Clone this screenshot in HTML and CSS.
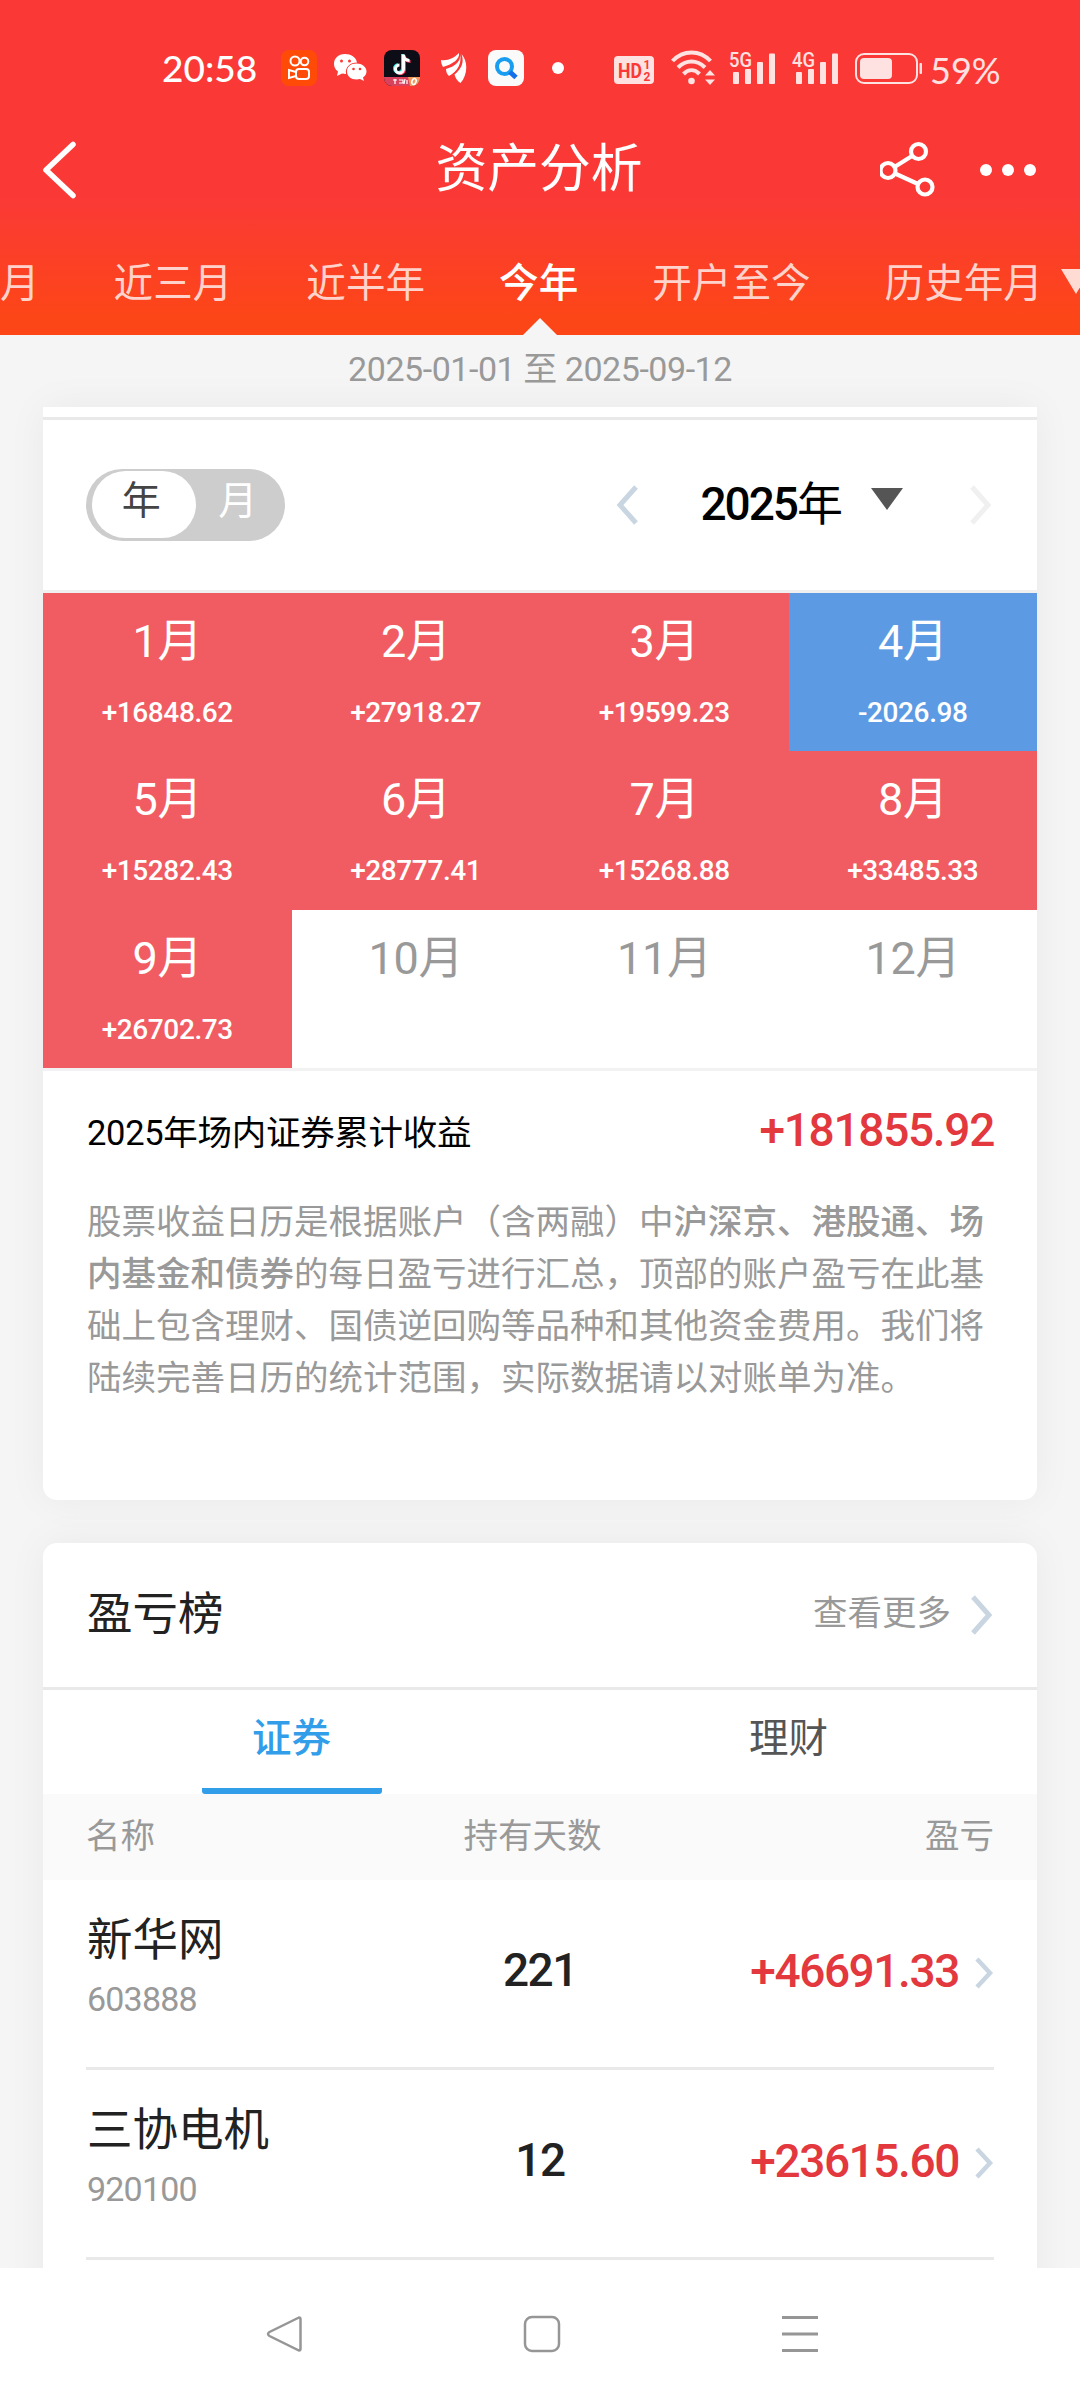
FILE: index.html
```html
<!DOCTYPE html>
<html lang="zh-CN">
<head>
  <meta charset="UTF-8" />
  <meta name="viewport" content="width=device-width, initial-scale=1.0"/>
  <title>资产分析</title>
  <link rel="stylesheet" href="styles.css">
</head>
<body>
  <header class="header">
    <div class="status-bar">
      <span class="time">20:58</span>
      <svg class="ico-ks" width="36" height="36" viewBox="0 0 36 36">
        <rect width="36" height="36" rx="8" fill="#ff4a08"/>
        <g fill="none" stroke="#fff" stroke-width="2">
          <circle cx="14" cy="11" r="4.5"/><circle cx="23.5" cy="11.5" r="3.8"/>
          <rect x="15" y="19" width="13" height="10" rx="3"/>
          <path d="M15 22l-7-2v8l7-2"/>
        </g>
      </svg>
      <svg class="ico-wx" width="34" height="30" viewBox="0 0 34 30">
        <path fill="#fff" d="M12 1C5 1 1 5.500 1 11c0 3 1.500 5.500 4 7.500L4 23l5-2.500c1 .3 3 .5 4 .5C12 14 17 9.500 24 9.500 23 4 18 1 12 1z"/>
        <path fill="#fff" d="M23.500 10.500C17.500 10.500 14 14 14 18.500s4 8 9.500 8c1.300 0 2.500-.2 3.500-.5l4 2-1-3.500c2-1.500 3.500-3.500 3.500-6 0-4.500-4.500-8-10-8z"/>
        <g fill="#fa3937"><circle cx="8.500" cy="8" r="1.500"/><circle cx="16.500" cy="8" r="1.500"/><circle cx="20.500" cy="16" r="1.300"/><circle cx="27" cy="16" r="1.300"/></g>
      </svg>
      <svg class="ico-dy" width="36" height="36" viewBox="0 0 36 36">
        <rect width="36" height="36" rx="8" fill="#0d0d18"/>
        <path d="M0 27h36v1a8 8 0 0 1-8 8H8a8 8 0 0 1-8-8z" fill="#d9425c"/>
        <path d="M24 27h12v1a8 8 0 0 1-8 8h-2z" fill="#f0995c"/>
        <g fill="none" stroke-width="3">
          <path stroke="#25e8e4" d="M18.500 4v14.500a4 4 0 1 1-4.500-4M18.500 5c.5 3 3 5 6 5"/>
          <path stroke="#fb3057" d="M20.500 5.500V20a4 4 0 0 1-6 3M20.500 6.500c.5 3 3 5 6 5"/>
          <path stroke="#fff" d="M19.500 4.500V19a4 4 0 1 1-4-4M19.500 5.500c.5 3 3 5 6 5"/>
        </g>
        <path d="M9 30h4M11 29v5M15 30h4v3h-4M21 29l-1 5M23 30v4" stroke="#fff" stroke-width="1.200" fill="none"/>
        <ellipse cx="30" cy="31.500" rx="2" ry="3" transform="rotate(20 30 31.500)" fill="none" stroke="#fff" stroke-width="1.600"/>
      </svg>
      <svg class="ico-wing" width="27" height="30" viewBox="0 0 27 30">
        <g fill="#fff">
          <path d="M0 7C7 8 13 5 18 0c1 6-6 11-16 14C1 12 0 10 0 7z"/>
          <path d="M19 1C20 8 15 13 5 16c0 3 1 5 3 7 9-5 13-13 11-22z"/>
          <path d="M20.500 1c3 8 0 15-7 20.500 1 4 3 6.500 6 8.500 7-8 8-21 1-29z"/>
        </g>
      </svg>
      <svg class="ico-search" width="36" height="36" viewBox="0 0 36 36">
        <rect width="36" height="36" rx="8" fill="#fafafa"/>
        <circle cx="16.500" cy="16.500" r="7.500" fill="none" stroke="#189df0" stroke-width="4"/>
        <path d="M22 22l6 5.500" stroke="#1470e8" stroke-width="5"/>
      </svg>
      <span class="dot"></span>
      <svg class="ico-hd" width="40" height="28" viewBox="0 0 40 28">
        <rect width="40" height="28" rx="4" fill="#fee1e1"/>
        <g class="hd-text"><text x="4" y="21.500" font-size="21" textLength="24" lengthAdjust="spacingAndGlyphs">HD</text><text x="29.500" y="13" font-size="12">1</text><text x="29.500" y="24.500" font-size="12">2</text></g>
      </svg>
      <svg class="ico-wifi" width="45" height="36" viewBox="0 0 45 36">
        <g fill="none" stroke="#fee1e1" stroke-width="4">
          <path d="M1.500 11C12-.5 29-.5 39.500 11"/><path d="M7 17.500c8-8 19-8 27 0"/><path d="M12.500 24c5-5 11-5 16 0"/>
        </g>
        <circle cx="20.500" cy="31" r="3.300" fill="#fee1e1"/>
        <path d="M34 25.500l5-5.500 5 5.500zM34 29.500l5 5.500 5-5.500z" fill="#fee1e1"/>
      </svg>
      <svg class="ico-signal" width="48" height="50" viewBox="0 -8 48 50">
        <text x="0" y="15.500" font-size="20" textLength="23" lengthAdjust="spacingAndGlyphs">5G</text>
        <g fill="#fee1e1"><rect x="4" y="21" width="6" height="12" rx="1"/><rect x="16" y="18" width="6" height="15" rx="1"/><rect x="28" y="11" width="6" height="22" rx="1"/><rect x="40" y="2.500" width="6" height="30.500" rx="1"/></g>
      </svg>
      <svg class="ico-signal" width="48" height="50" viewBox="0 -8 48 50">
        <text x="0" y="15.500" font-size="20" textLength="23" lengthAdjust="spacingAndGlyphs">4G</text>
        <g fill="#fee1e1"><rect x="4" y="21" width="6" height="12" rx="1"/><rect x="16" y="18" width="6" height="15" rx="1"/><rect x="28" y="11" width="6" height="22" rx="1"/><rect x="40" y="2.500" width="6" height="30.500" rx="1"/></g>
      </svg>
      <svg class="ico-battery" width="68" height="32" viewBox="0 0 68 32">
        <rect x="1" y="1" width="61" height="29" rx="8" fill="none" stroke="#fee1e1" stroke-width="2"/>
        <rect x="5" y="5" width="32" height="21" rx="4" fill="#fee1e1"/>
        <rect x="64.500" y="10" width="2.500" height="11" rx="1" fill="#fee1e1"/>
      </svg>
      <span class="percent">59%</span>
    </div>

    <div class="title-bar">
      <svg width="38" height="58" viewBox="0 0 38 58"><path d="M33 3.500L6 29l27 25.500" fill="none" stroke="#fff" stroke-width="5.500" stroke-linecap="round" stroke-linejoin="round"/></svg>
      <h1>资产分析</h1>
      <svg width="160" height="58" viewBox="0 0 160 58">
        <g fill="none" stroke="#fff" stroke-width="4.200">
          <circle cx="38.500" cy="10.500" r="7.500"/><circle cx="8" cy="29.500" r="7.500"/><circle cx="45" cy="46" r="7.500"/>
          <path d="M14.500 26l17.500-11M15 32.500l23 10.500"/>
        </g>
        <g fill="#fff"><circle cx="106" cy="29" r="6"/><circle cx="128" cy="29" r="6"/><circle cx="150" cy="29" r="6"/></g>
      </svg>
    </div>

    <nav class="range-tabs">
      <span>月</span>
      <span>近三月</span>
      <span>近半年</span>
      <span class="active">今年</span>
      <span>开户至今</span>
      <span class="history">历史年月<i></i></span>
    </nav>
  </header>

  <main class="content">
    <div class="date-range">2025-01-01 至 2025-09-12</div>

    <section class="card calendar-card">
      <div class="calendar-head">
        <div class="switch"><span class="on">年</span><span>月</span></div>
        <div class="year-picker">
          <svg width="24" height="40" viewBox="0 0 24 40"><path d="M20 2L4 20l16 18" fill="none" stroke="#c9d6e2" stroke-width="5"/></svg>
          <span class="year">2025<b>年</b></span>
          <svg class="caret" width="34" height="24" viewBox="0 0 34 24"><path d="M1 1h32L17 23z" fill="#555"/></svg>
          <svg width="24" height="40" viewBox="0 0 24 40"><path d="M2 2l16 18L2 38" fill="none" stroke="#f0f0f0" stroke-width="5"/></svg>
        </div>
      </div>
      <div class="months">
        <div class="month up"><span>1月</span><em>+16848.62</em></div>
        <div class="month up"><span>2月</span><em>+27918.27</em></div>
        <div class="month up"><span>3月</span><em>+19599.23</em></div>
        <div class="month down"><span>4月</span><em>-2026.98</em></div>
        <div class="month up"><span>5月</span><em>+15282.43</em></div>
        <div class="month up"><span>6月</span><em>+28777.41</em></div>
        <div class="month up"><span>7月</span><em>+15268.88</em></div>
        <div class="month up"><span>8月</span><em>+33485.33</em></div>
        <div class="month up"><span>9月</span><em>+26702.73</em></div>
        <div class="month"><span>10月</span></div>
        <div class="month"><span>11月</span></div>
        <div class="month"><span>12月</span></div>
      </div>
      <div class="total">
        <span class="total-label">2025年场内证券累计收益</span>
        <span class="total-value">+181855.92</span>
      </div>
      <p class="note">股票收益日历是根据账户（含两融）中<b>沪深京、港股通、场内基金和债券</b>的每日盈亏进行汇总，顶部的账户盈亏在此基础上包含理财、国债逆回购等品种和其他资金费用。我们将陆续完善日历的统计范围，实际数据请以对账单为准。</p>
    </section>

    <section class="card rank-card">
      <div class="rank-head">
        <h2>盈亏榜</h2>
        <div class="more">
          <span>查看更多</span>
          <svg width="24" height="40" viewBox="0 0 24 40"><path d="M3 2l16 18L3 38" fill="none" stroke="#c9d6e2" stroke-width="5"/></svg>
        </div>
      </div>
      <div class="rank-tabs">
        <span class="active">证券</span>
        <span>理财</span>
      </div>
      <div class="rank-row rank-labels">
        <span>名称</span><span>持有天数</span><span>盈亏</span>
      </div>
      <div class="rank-row stock">
        <div class="name">新华网<small>603888</small></div>
        <div class="days">221</div>
        <div class="profit">+46691.33<svg width="19" height="32" viewBox="0 0 19 32"><path d="M2 2l13 14L2 30" fill="none" stroke="#c9d6e2" stroke-width="4.500"/></svg></div>
      </div>
      <div class="rank-row stock">
        <div class="name">三协电机<small>920100</small></div>
        <div class="days">12</div>
        <div class="profit">+23615.60<svg width="19" height="32" viewBox="0 0 19 32"><path d="M2 2l13 14L2 30" fill="none" stroke="#c9d6e2" stroke-width="4.500"/></svg></div>
      </div>
    </section>
  </main>

  <footer class="nav-bar">
    <svg width="38" height="38" viewBox="0 0 38 38"><path d="M34 2.500L4.500 17q-3 2 0 4L34 35.500q1.500 0 1.500-2v-29q0-2-1.500-2z" fill="none" stroke="#969696" stroke-width="2.500"/></svg>
    <svg width="38" height="38" viewBox="0 0 38 38"><rect x="2" y="2" width="34" height="34" rx="7" fill="none" stroke="#969696" stroke-width="2.500"/></svg>
    <svg width="38" height="38" viewBox="0 0 38 38"><path d="M1 2.500h36M1 19h36M1 35.500h36" stroke="#969696" stroke-width="3"/></svg>
  </footer>
</body>
</html>
```
FILE: styles.css
```css
* {
  box-sizing: border-box;
}

body {
  margin: 0;
  width: 1080px;
  height: 2400px;
  display: flex;
  flex-direction: column;
  overflow: hidden;
  font-family: Roboto, 'Noto Sans CJK SC', sans-serif;
  color: #222;
  background-color: #f5f5f5;
}

svg {
  display: block;
  flex-shrink: 0;
}

h1, h2, p {
  margin: 0;
  font-weight: 400;
}

/* header */
.header {
  height: 335px;
  flex-shrink: 0;
  background: linear-gradient(#fa3937 0, #fa3937 195px, #fd4617 320px);
  color: #fff;
}

.status-bar {
  display: flex;
  align-items: center;
  height: 116px;
  padding: 20px 0 0 162px;
}

.time {
  width: 119px;
  font-family: Lato, sans-serif;
  font-size: 37px;
  font-weight: 500;
  line-height: 44px;
}

.ico-ks { margin-right: 16px; }
.ico-wx { margin-right: 17px; }
.ico-dy { margin-right: 21px; }
.ico-wing { margin-right: 20px; }
.ico-search { margin-right: 28px; }

.dot {
  width: 12px;
  height: 12px;
  margin-right: 50px;
  border-radius: 50%;
  background: #fff;
}

.ico-hd { margin: 4px 17px 0 0; }
.ico-wifi { margin-right: 13px; }
.ico-signal { margin-right: 15px; }
.ico-battery { margin: 2px 7px 0 0; }

.hd-text {
  font-weight: 700;
  fill: #fa3937;
}

.ico-signal text {
  font-weight: 500;
  fill: #fee1e1;
}

.percent {
  padding-top: 3px;
  font-family: Lato, sans-serif;
  font-size: 36px;
  line-height: 44px;
  color: #fee1e1;
}

.title-bar {
  display: grid;
  grid-template-columns: 160px 1fr 160px;
  align-items: center;
  height: 108px;
  padding: 0 40px;
}

.title-bar h1 {
  margin-left: -2px;
  text-align: center;
  font-size: 51.8px;
  line-height: 60px;
}

.range-tabs {
  display: flex;
  gap: 74px;
  height: 111px;
  overflow: hidden;
  font-size: 39.6px;
  line-height: 120px;
  white-space: nowrap;
  color: #ffd3cb;
}

.range-tabs .active {
  position: relative;
  font-weight: 500;
  color: #fff;
}

.range-tabs .active::after {
  content: '';
  position: absolute;
  left: 50%;
  top: 94px;
  margin-left: -17px;
  border: 18px solid transparent;
  border-top: 0;
  border-bottom-color: #f5f5f5;
}

.history i {
  display: inline-block;
  margin-left: 18px;
  vertical-align: 3px;
  border: 15px solid transparent;
  border-top: 25px solid #ffdbd3;
  border-bottom: 0;
}

/* content */
.content {
  height: 1933px;
  overflow: hidden;
  padding: 0 43px;
}

.date-range {
  height: 72px;
  text-align: center;
  font-size: 34px;
  line-height: 68px;
  letter-spacing: -0.45px;
  color: #999;
}

.card {
  background: #fff;
  border-radius: 14px;
  box-shadow: 0 0 40px rgba(0, 0, 0, 0.05);
}

.calendar-card {
  height: 1093px;
  padding-top: 10px;
  border-radius: 0 0 14px 14px;
}

.calendar-head {
  display: flex;
  align-items: center;
  justify-content: space-between;
  height: 176px;
  padding: 0 43px;
  border-top: 3px solid #e9e9e9;
  border-bottom: 3px solid #f0f0f0;
}

.switch {
  display: flex;
  width: 199px;
  height: 72px;
  padding: 2px 6px;
  border-radius: 36px;
  background: #cdcdcd;
  color: #fff;
  font-size: 39px;
  line-height: 60px;
}

.switch span {
  width: 84px;
  text-align: center;
}

.switch .on {
  width: 106px;
  height: 67px;
  padding-right: 6px;
  border-radius: 34px;
  background: #fff;
  color: #444;
}

.year-picker {
  display: flex;
  align-items: center;
}

.year {
  margin: -3px 0 0 60px;
  font-size: 46px;
  font-weight: 500;
  line-height: 60px;
  letter-spacing: -2px;
  color: #000;
}

.year b {
  font-weight: 400;
}

.caret {
  margin: 0 66px 12px 29px;
}

.months {
  display: grid;
  grid-template-columns: repeat(4, 1fr);
  grid-auto-rows: 158.3px;
  border-bottom: 3px solid #f2f2f2;
}

.month {
  display: flex;
  flex-direction: column;
  align-items: center;
  color: #999;
}

.month.up,
.month.down {
  color: #fff;
  background: #f05c62;
}

.month.down {
  background: #5c9be4;
}

.month span {
  margin-top: 19px;
  font-size: 45px;
  line-height: 60px;
  letter-spacing: -0.3px;
}

.month em {
  margin-top: 21px;
  font-size: 28px;
  font-style: normal;
  font-weight: 500;
  line-height: 40px;
  letter-spacing: -0.4px;
}

.total {
  display: flex;
  justify-content: space-between;
  height: 122px;
  padding: 28px 43px 0 44px;
}

.total-label {
  padding-top: 3px;
  font-size: 34.5px;
  line-height: 62px;
  letter-spacing: -0.3px;
  color: #000;
}

.total-value {
  font-size: 46px;
  font-weight: 500;
  line-height: 62px;
  letter-spacing: -1.3px;
  color: #e2383e;
}

.note {
  padding: 3px 43px 0 44px;
  font-size: 34.5px;
  line-height: 52px;
  color: #999;
}

.note b {
  font-weight: 500;
}

.rank-card {
  height: 900px;
  margin-top: 43px;
}

.rank-head {
  display: flex;
  align-items: center;
  justify-content: space-between;
  height: 147px;
  padding: 0 43px 0 44px;
  border-bottom: 3px solid #e9e9e9;
}

.rank-head h2 {
  font-size: 45.5px;
  line-height: 60px;
}

.more {
  display: flex;
  align-items: center;
  gap: 19px;
  font-size: 34.5px;
  color: #999;
}

.more span {
  line-height: 40px;
  padding-bottom: 5px;
}

.rank-tabs {
  display: grid;
  grid-template-columns: 1fr 1fr;
  justify-items: center;
  height: 104px;
  font-size: 39.5px;
  line-height: 98px;
  color: #555;
}

.rank-tabs span {
  width: 180px;
  text-align: center;
}

.rank-tabs .active {
  font-weight: 500;
  color: #329de8;
  border-bottom: 6px solid #329de8;
  border-radius: 3px;
}

.rank-row {
  display: grid;
  grid-template-columns: 1fr 1fr 1fr;
}

.rank-labels {
  height: 86px;
  padding: 0 43px;
  background: #fafafa;
  font-size: 34.5px;
  line-height: 84px;
  color: #999;
}

.rank-labels span:nth-child(2) {
  padding-right: 15px;
  text-align: center;
}

.rank-labels span:last-child {
  text-align: right;
}

.stock {
  height: 190px;
  margin: 0 43px;
  border-bottom: 3px solid #e9e9e9;
}

.name {
  padding: 29px 0 0 1px;
  font-size: 45.5px;
  line-height: 64px;
}

.name small {
  display: block;
  font-size: 34px;
  line-height: 52px;
  letter-spacing: -0.8px;
  color: #999;
}

.days {
  padding-top: 58px;
  text-align: center;
  font-size: 46px;
  font-weight: 500;
  line-height: 64px;
  letter-spacing: -1.4px;
}

.profit {
  display: flex;
  justify-content: flex-end;
  gap: 16px;
  padding-top: 59px;
  font-size: 46px;
  font-weight: 500;
  line-height: 64px;
  letter-spacing: -1.4px;
  color: #e2383e;
}

.profit svg {
  margin-top: 18px;
}

/* system navigation */
.nav-bar {
  display: flex;
  justify-content: center;
  gap: 220px;
  height: 132px;
  padding: 47px 0 0 4px;
  background: #fff;
}
```
